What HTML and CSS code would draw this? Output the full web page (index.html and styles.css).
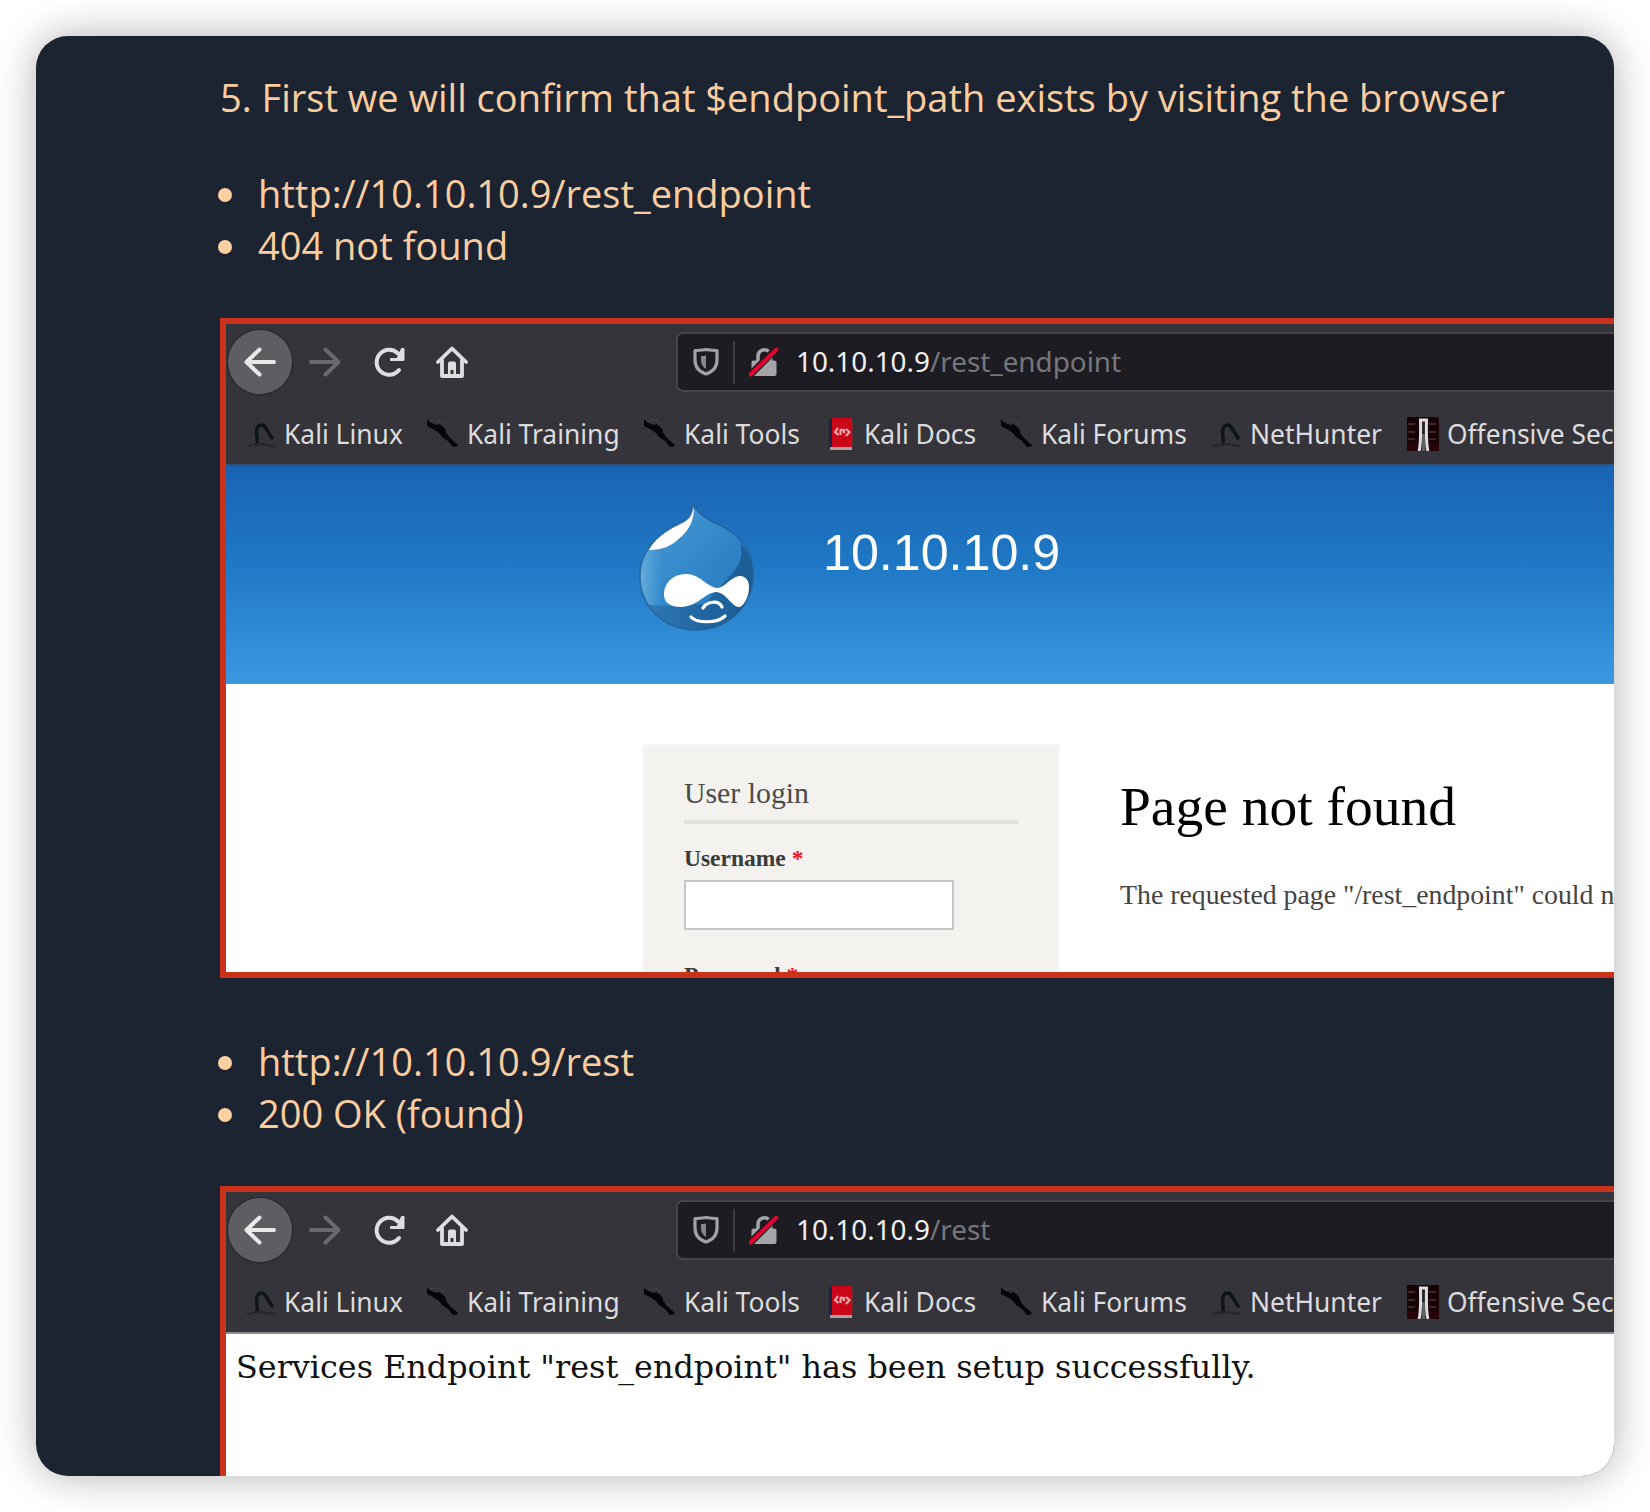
FILE: index.html
```
<!DOCTYPE html>
<html lang="en">
<head>
<meta charset="utf-8">
<title>Confirm the endpoint path</title>
<link rel="stylesheet" href="styles.css">
</head>
<body>
<svg class="defs" width="0" height="0" aria-hidden="true">
  <defs>
    <linearGradient id="drop" x1="0" y1="0" x2="1" y2="1"><stop offset="0" stop-color="#4b9bd3"/><stop offset=".5" stop-color="#3288cb"/><stop offset="1" stop-color="#206fb2"/></linearGradient>
    <linearGradient id="shade" x1="0" y1="0" x2="1" y2="0"><stop offset="0" stop-color="#2f79b5"/><stop offset=".6" stop-color="#1f639e"/><stop offset="1" stop-color="#1c5c95"/></linearGradient>
    <linearGradient id="rim" x1="0" y1="0" x2="1" y2="0"><stop offset="0" stop-color="#6db2df" stop-opacity=".8"/><stop offset=".4" stop-color="#6db2df" stop-opacity="0"/></linearGradient>
    <filter id="soft" x="-10%" y="-10%" width="120%" height="120%"><feGaussianBlur stdDeviation=".7"/></filter>
  </defs>
  <symbol id="back" viewBox="0 0 32 32"><path d="M30 16H2.500M15.500 3.500 2.500 16l13 12.500" fill="none" stroke="currentColor" stroke-width="4" stroke-linecap="round" stroke-linejoin="round"/></symbol>
  <symbol id="reload" viewBox="0 0 32 32"><path d="M26 24A12.500 12.500 0 1 1 25 7.500" fill="none" stroke="currentColor" stroke-width="4" stroke-linecap="round"/><path d="M31 2.500v12H17.500v-2h6.500L28.500 2.500z" fill="currentColor" stroke="currentColor" stroke-linejoin="round"/></symbol>
  <symbol id="home" viewBox="0 0 32 32"><path d="M2 16 16 2.500 30 16M6 14v16h20V14" fill="none" stroke="currentColor" stroke-width="3.800" stroke-linecap="round" stroke-linejoin="round"/><path d="M12 17.500q0-2 2-2h4q2 0 2 2V30h-2.500v-6h-3v6H12z" fill="currentColor"/></symbol>
  <symbol id="shield" viewBox="0 0 26 30"><path d="M13 2.500C9 3 5 3.500 2 3.500V13c0 8 5 12 11 14 6-2 11-6 11-14V3.500C21 3.500 17 3 13 2.500z" fill="none" stroke="#a2a2a6" stroke-width="3.200" stroke-linejoin="round"/><path d="M13 8.500c-2 .4-3.500.5-5 .5v4c0 4 1.500 7 5 9z" fill="#88888c"/></symbol>
  <symbol id="lock" viewBox="0 0 30 30"><path d="M9 14V9a6.300 6.300 0 0 1 12.600 0v5" fill="none" stroke="#a5a5a9" stroke-width="3.600"/><rect x="2.500" y="13.500" width="25" height="15.500" rx="2" fill="#a5a5a9"/><path d="M-1 25 25-1l5 5L4 30z" fill="#1c1b22"/><path d="M1.500 27.500 27.500 2.500" stroke="#e8002f" stroke-width="4" stroke-linecap="round"/></symbol>
  <symbol id="kali" viewBox="0 0 32 32"><path d="M13 26C14 19 11 14 13.500 9.500c2-3.500 6-3 8 0L28 20" fill="none" stroke="#111215" stroke-width="3.400" stroke-linecap="round" stroke-linejoin="round" filter="url(#soft)"/><path d="M3 28.500q7-3 13-2.500t14 2.500" fill="none" stroke="#26272b" stroke-width="2.500" filter="url(#soft)"/></symbol>
  <symbol id="knife" viewBox="0 0 32 32"><path d="M0 1 2.500 4l7 3 3-1 5.500 4.500 1.500 5 4 5 7.500 6.500-1 1.500-4 .5-5-6-6-4-3-4-5-3.500L0 8z" fill="#050607"/><path d="m4 3 8-1 6 5" fill="none" stroke="#45464a" stroke-width="1.500" stroke-dasharray="2 2"/></symbol>
  <symbol id="docs" viewBox="0 0 32 34"><path d="M5 2h4v29H5z" fill="#1d2146"/><path d="M8 1h20v29H8z" fill="#cb0619"/><path d="M28 4v25" stroke="#79302f" stroke-width="1.500"/><path d="M6 30h22v3H6z" fill="#a9a3a5"/><path d="m14 11-3 4 3.500 3M22 12l3.500 3-3.500 4M16.500 18V14q0-2 2-1t1.500 3V12" fill="none" stroke="#f0a4a8" stroke-width="2.200"/></symbol>
  <symbol id="offsec" viewBox="0 0 32 34"><path d="M0 0h32v34H0z" fill="#160306"/><path d="M1 7h9m12 0h9M1 15h9m12 0h9M1 22h9m12 0h9" stroke="#3d2628" stroke-width="2" stroke-dasharray="7 2"/><path d="M0 26h32v8H0z" fill="#260407"/><path d="M12 34q2-6 1.500-31h6Q19 28 21 34" fill="#242326" stroke="#dedede" stroke-width="3"/><path d="M15 17h3v17h-3z" fill="#5f6062"/></symbol>
  <symbol id="druplicon" viewBox="0 0 116 130">
    <path d="M54 2C53 12 50 16 42 20 17 31 1 49 1 73c0 32 25 54 56 54s57-24 57-55c0-27-16-43-38-52C67 16 59 10 54 2z" fill="url(#drop)"/>
    <path d="M101 40Q107 57 90 74 78 87 66 101L25 103 9 102Q24 127 57 127c32 0 57-23 57-55 0-13-5-24-13-32z" fill="url(#shade)"/>
    <path d="M54 2C53 12 50 16 42 20 17 31 1 49 1 73c0 12 4 22 9 29h24Q15 79 31 44z" fill="url(#rim)"/>
    <path d="M54 2C53 12 50 16 42 20 27 27 15 36 10 47q18 1 32-13C51 26 57 13 54 2z" fill="#fff" filter="url(#soft)"/>
    <path d="M54 2C53 12 50 16 42 20 17 31 1 49 1 73c0 32 25 54 56 54s57-24 57-55c0-27-16-43-38-52C67 16 59 10 54 2z" fill="none" stroke="#265f91" stroke-opacity=".75" stroke-width="1.600"/>
    <path d="M25 92c0-12 9-21 22-21 14 0 21 13 31 14 8 0 14-12 23-12 6 0 9 5 9 11 0 9-4 17-9 20-8 1-14-15-24-15-10 0-19 15-35 15-10 0-17-4-17-12z" fill="#fff"/>
    <path d="M64 105c4-7 16-8 19-1M52 114c5 6 26 7 34-1" fill="none" stroke="#fff" stroke-width="3.200" stroke-linecap="round"/>
  </symbol>
</svg>

<main class="card">
  <article class="notes">
    <p class="step">5. First we will confirm that $endpoint_path exists by visiting the browser</p>

    <ul class="results">
      <li>http://10.10.10.9/rest_endpoint</li>
      <li>404 not found</li>
    </ul>

    <section class="shot shot-missing">
      <header class="chrome">
        <div class="toolbar">
          <span class="btn btn-back"><svg width="32" height="32"><use href="#back"/></svg></span>
          <span class="btn btn-forward"><svg width="32" height="32"><use href="#back"/></svg></span>
          <span class="btn btn-reload"><svg width="32" height="32"><use href="#reload"/></svg></span>
          <span class="btn btn-home"><svg width="32" height="32"><use href="#home"/></svg></span>
          <div class="address">
            <svg class="shield" width="26" height="30"><use href="#shield"/></svg>
            <i class="divider"></i>
            <svg class="lock" width="30" height="30"><use href="#lock"/></svg>
            <span class="url"><b>10.10.10.9</b>/rest_endpoint</span>
          </div>
        </div>
        <nav class="bookmarks">
          <a><svg><use href="#kali"/></svg>Kali Linux</a>
          <a><svg><use href="#knife"/></svg>Kali Training</a>
          <a><svg><use href="#knife"/></svg>Kali Tools</a>
          <a><svg><use href="#docs"/></svg>Kali Docs</a>
          <a><svg><use href="#knife"/></svg>Kali Forums</a>
          <a><svg><use href="#kali"/></svg>NetHunter</a>
          <a><svg><use href="#offsec"/></svg>Offensive Sec</a>
        </nav>
      </header>
      <div class="banner">
        <svg class="logo" width="116" height="130"><use href="#druplicon"/></svg>
        <span class="site">10.10.10.9</span>
      </div>
      <div class="page">
        <aside class="login">
          <h2>User login</h2>
          <label>Username <em>*</em></label>
          <div class="field"></div>
          <label class="second">Password <em>*</em></label>
        </aside>
        <div class="message">
          <h1>Page not found</h1>
          <p>The requested page "/rest_endpoint" could not be found.</p>
        </div>
      </div>
    </section>

    <ul class="results">
      <li>http://10.10.10.9/rest</li>
      <li>200 OK (found)</li>
    </ul>

    <section class="shot shot-found">
      <header class="chrome">
        <div class="toolbar">
          <span class="btn btn-back"><svg width="32" height="32"><use href="#back"/></svg></span>
          <span class="btn btn-forward"><svg width="32" height="32"><use href="#back"/></svg></span>
          <span class="btn btn-reload"><svg width="32" height="32"><use href="#reload"/></svg></span>
          <span class="btn btn-home"><svg width="32" height="32"><use href="#home"/></svg></span>
          <div class="address">
            <svg class="shield" width="26" height="30"><use href="#shield"/></svg>
            <i class="divider"></i>
            <svg class="lock" width="30" height="30"><use href="#lock"/></svg>
            <span class="url"><b>10.10.10.9</b>/rest</span>
          </div>
        </div>
        <nav class="bookmarks">
          <a><svg><use href="#kali"/></svg>Kali Linux</a>
          <a><svg><use href="#knife"/></svg>Kali Training</a>
          <a><svg><use href="#knife"/></svg>Kali Tools</a>
          <a><svg><use href="#docs"/></svg>Kali Docs</a>
          <a><svg><use href="#knife"/></svg>Kali Forums</a>
          <a><svg><use href="#kali"/></svg>NetHunter</a>
          <a><svg><use href="#offsec"/></svg>Offensive Sec</a>
        </nav>
      </header>
      <p class="reply">Services Endpoint "rest_endpoint" has been setup successfully.</p>
    </section>
  </article>
</main>
</body>
</html>
```
FILE: styles.css
```
* { box-sizing: border-box; }
html, body { margin: 0; height: 1512px; overflow: hidden; background: #fff; }
body { padding: 36px; }
.defs { position: absolute; }

.card {
  width: 1578px;
  height: 1440px;
  overflow: hidden;
  border-radius: 32px;
  background: #1c2432;
  box-shadow: 0 0 40px rgba(0, 0, 0, .31);
}
.notes {
  margin-left: 184px;
  width: 1500px;
  padding-top: 35px;
  font: 400 38px/52px "Open Sans", sans-serif;
  color: #f9cda0;
}
.step { margin: 0; height: 52px; white-space: nowrap; }
.results { margin: 44px 0 0; padding: 0; height: 104px; list-style: none; }
.results li { display: flex; align-items: center; height: 52px; white-space: nowrap; }
.results li::before {
  content: "";
  flex: none;
  width: 14px;
  height: 14px;
  margin: 3px 26px 0 -2px;
  border-radius: 50%;
  background: #fdd0a2;
}

.shot { margin-top: 47px; width: 1600px; overflow: hidden; border: 6px solid #c9331c; background: #fff; }
.shot-missing { height: 660px; }
.shot-found { height: 400px; }
.shot-missing + .results { margin-top: 57px; }

.chrome { height: 142px; background: #35343a; border-bottom: 2px solid #8d8d90; color: #dcdcde; }
.shot-missing .chrome { border-color: #2b5478; }
.toolbar { display: flex; align-items: center; height: 76px; padding-left: 2px; }
.btn { display: flex; align-items: center; justify-content: center; width: 63px; height: 64px; color: #dedee0; }
.btn svg { display: block; }
.btn-back { width: 64px; border-radius: 50%; background: #5d5e62; box-shadow: 0 0 0 1.500px #2b2a30; color: #e9e9ea; }
.btn-forward { width: 66px; color: #69696e; }
.btn-forward svg { transform: scaleX(-1); }
.btn-reload { width: 61px; }
.btn-home { width: 66px; }
.address {
  display: flex;
  align-items: center;
  width: 1000px;
  height: 60px;
  margin-left: 191px;
  border: 2px solid #46464b;
  border-radius: 7px;
  background: #1c1c22;
}
.shield { margin-left: 15px; }
.divider { width: 2px; height: 43px; margin-left: 14px; background: #3b3b40; }
.lock { margin-left: 14px; }
.url { margin: 0 0 2px 17px; font: 400 27.850px/40px "Noto Sans", sans-serif; color: #77777b; white-space: nowrap; }
.url b { font-weight: 400; color: #f0f0f2; }

.bookmarks {
  display: grid;
  grid-template-columns: 183px 217px 180px 177px 209px 197px 400px;
  height: 64px;
  padding: 4px 0 0 18px;
  font: 400 26.400px/36px "Noto Sans", sans-serif;
}
.bookmarks a { display: flex; align-items: center; white-space: nowrap; }
.bookmarks svg { flex: none; width: 32px; height: 34px; margin-right: 8px; }

.banner {
  display: flex;
  height: 218px;
  padding: 37px 0 0 413px;
  background: linear-gradient(#1a63b2, #1f78c5 45%, #3b98e0);
}
.site { margin: 20px 0 0 68px; font: 400 50.200px/60px "Liberation Sans", sans-serif; color: #fff; }

.page { display: flex; padding: 60px 0 0 416px; font-family: "Liberation Serif", serif; }
.login { width: 418px; height: 300px; padding: 29px 40px; border: 2px solid #f7f7f6; background: #f3f2ee; }
.login h2 { margin: 0; height: 49px; border-bottom: 4px solid #dfdfdb; font: 400 29.800px/36px "Liberation Serif", serif; color: #4a4a4a; }
.login label { display: block; margin-top: 20px; font: 700 23.500px/28px "Liberation Serif", serif; color: #3b3b3b; }
.login em { font-style: normal; color: #f8142c; }
.field { width: 270px; height: 50px; margin-top: 8px; border: 2px solid #c6c6c6; background: #fff; }
.login .second { margin-top: 31px; }
.message { margin-left: 60px; white-space: nowrap; }
.message h1 { margin: 31px 0 0; font: 400 55.500px/64px "Liberation Serif", serif; color: #000; }
.message p { margin: 38px 0 0; font: 400 27.800px/36px "Liberation Serif", serif; color: #444; }

.reply { margin: 13px 0 0 10px; font: 400 31.840px/40px "DejaVu Serif", serif; color: #111; white-space: nowrap; }
```
